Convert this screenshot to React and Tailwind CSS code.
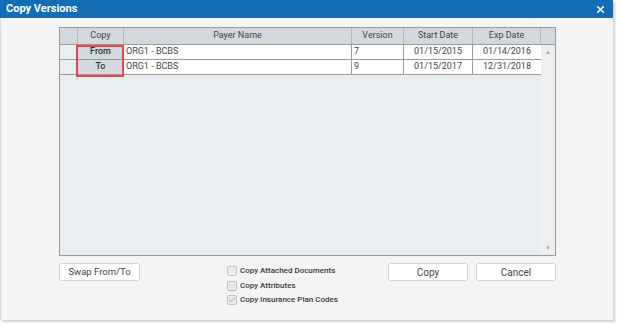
import { X, Check } from "lucide-react";

const font = { fontFamily: "Roboto, 'Liberation Sans', sans-serif" };

function HeaderCell({ children, className = "" }) {
  return (
    <div
      className={`flex items-center justify-center border-r border-[#b4b9be] text-[9px] text-[#444] ${className}`}
    >
      {children}
    </div>
  );
}

function DataRow({ copy, payer, version, start, exp }) {
  return (
    <div className="grid h-[15px] grid-cols-[18px_46px_228px_52px_69px_68px] border-b border-[#9a9a9a] text-[9px] text-[#444]">
      <div className="border-r border-[#b4b9be] bg-[#eceff2]"></div>
      <div className="flex items-center justify-center border-r border-[#9a9a9a] bg-[#d3d9de] font-medium text-[#333]">
        {copy}
      </div>
      <div className="flex items-center border-r border-[#9a9a9a] bg-white pl-[2px]">
        {payer}
      </div>
      <div className="flex items-center border-r border-[#9a9a9a] bg-white pl-[2px]">
        {version}
      </div>
      <div className="flex items-center justify-center border-r border-[#9a9a9a] bg-white">
        {start}
      </div>
      <div className="flex items-center justify-center bg-white">{exp}</div>
    </div>
  );
}

function Checkbox({ label, checked }) {
  return (
    <div className="flex h-[14.5px] items-center gap-[3px]">
      <div className="flex h-[10px] w-[10px] items-center justify-center rounded-[2px] border border-[#c4c4c4] bg-[#ececec]">
        {checked && <Check className="h-[8px] w-[8px] text-[#999]" strokeWidth={3} />}
      </div>
      <span className="text-[8px] font-medium text-[#3a3a3a]">{label}</span>
    </div>
  );
}

function Button({ children, className = "" }) {
  return (
    <button
      className={`flex h-[18px] items-center justify-center rounded-[3px] border border-[#cfd4d8] bg-white text-[#444] ${className}`}
    >
      {children}
    </button>
  );
}

export default function App() {
  return (
    <div className="h-[328px] w-[621px] bg-white" style={font}>
      <div className="flex h-[320px] w-[613px] flex-col bg-[#f4f4f4] shadow-[2px_2px_2px_rgba(0,0,0,0.18)]">
        {/* Title bar */}
        <div className="flex h-[18px] items-center justify-between bg-[#126db5] pl-[6px] pr-[7px]">
          <span className="text-[11px] font-bold text-white">Copy Versions</span>
          <X className="h-[11px] w-[11px] text-white" strokeWidth={3.5} />
        </div>

        {/* Body */}
        <div className="flex flex-1 flex-col border-l border-[#d5dde6] pl-[58px] pr-[57px] pt-[9px]">
          {/* Grid */}
          <div className="flex h-[229px] flex-col border border-[#9a9a9a] bg-[#e9edf0]">
            <div className="grid h-[17px] grid-cols-[18px_46px_228px_52px_69px_68px_14px] border-b border-[#9a9a9a] bg-[#d2d8dd]">
              <HeaderCell />
              <HeaderCell>Copy</HeaderCell>
              <HeaderCell>Payer Name</HeaderCell>
              <HeaderCell>Version</HeaderCell>
              <HeaderCell>Start Date</HeaderCell>
              <HeaderCell>Exp Date</HeaderCell>
              <HeaderCell className="border-r-0" />
            </div>
            <div className="flex flex-1">
              <div className="relative flex-1">
                <DataRow copy="From" payer="ORG1 - BCBS" version="7" start="01/15/2015" exp="01/14/2016" />
                <DataRow copy="To" payer="ORG1 - BCBS" version="9" start="01/15/2017" exp="12/31/2018" />
                <div className="absolute left-[16px] top-0 h-[32px] w-[48px] border-2 border-[#ee4149]"></div>
              </div>
              <div className="flex w-[14px] flex-col items-center justify-between bg-[#efefef] py-[4px] text-[6px] leading-none text-[#aaa]">
                <span>▲</span>
                <span>▼</span>
              </div>
            </div>
          </div>

          {/* Footer */}
          <div className="mt-[7px] flex items-start">
            <Button className="w-[81px] text-[9.5px]">Swap From/To</Button>
            <div className="ml-[87px] mt-[1px] flex flex-col">
              <Checkbox label="Copy Attached Documents" />
              <Checkbox label="Copy Attributes" />
              <Checkbox label="Copy Insurance Plan Codes" checked />
            </div>
            <div className="ml-auto flex gap-[8px]">
              <Button className="w-[80px] text-[10px]">Copy</Button>
              <Button className="w-[80px] text-[10px]">Cancel</Button>
            </div>
          </div>
        </div>
      </div>
    </div>
  );
}
